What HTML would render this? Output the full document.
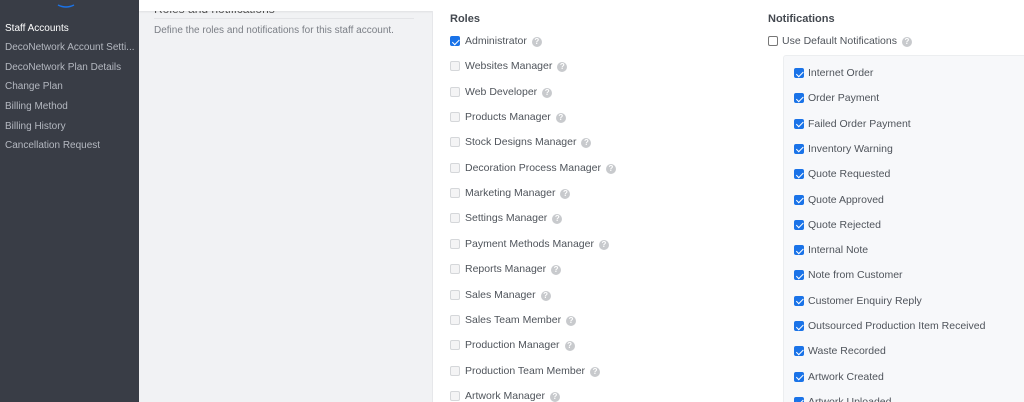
<!DOCTYPE html>
<html><head><meta charset="utf-8"><style>
*{margin:0;padding:0;box-sizing:border-box}
html,body{width:1024px;height:402px;overflow:hidden}
body{background:#f1f2f4;font-family:"Liberation Sans",sans-serif;position:relative}
.side{position:absolute;left:0;top:0;width:139px;height:402px;background:#393d46}
.side div{position:absolute;left:5px;font-size:10px;color:#b4b8c0;white-space:nowrap;line-height:12px}
.side .act{color:#fff}
.topbar{position:absolute;left:139px;top:0;right:0;height:11px;background:#fff;box-shadow:0 1px 2px rgba(0,0,0,.08)}
.card{position:absolute;left:432px;top:11px;width:600px;height:391px;background:#fff;border-left:1px solid #e6e7ea}
.t{position:absolute;font-size:10.5px;color:#4f545b;white-space:nowrap;line-height:12px}
.h{position:absolute;font-size:11px;font-weight:bold;color:#444950;line-height:12px}
.cb{position:absolute;width:10px;height:10px;border:1px solid #d5d7da;border-radius:2px;background:#f4f4f5}
.cb.on{background:#1a73e8;border-color:#1a73e8}
.cb.on::after{content:"";position:absolute;left:2.5px;top:0.5px;width:3px;height:5.5px;border:solid #fff;border-width:0 1.5px 1.5px 0;transform:rotate(45deg)}
.cb.w{background:#fff;border-color:#777}
.q{display:inline-block;width:10px;height:10px;border-radius:50%;background:#c8cacd;color:#fff;font-size:8px;text-align:center;line-height:10px;margin-left:5px;vertical-align:0px;font-weight:bold}
.nbox{position:absolute;left:783px;top:55px;width:260px;height:360px;background:#f7f8fa;border:1px solid #eceef0;border-radius:3px}
</style></head><body>
<div class="side">
<svg style="position:absolute;left:56px;top:0" width="20" height="8"><path d="M2 5 Q10 9 18 5" stroke="#1a73e8" stroke-width="1.5" fill="none"/></svg>
<div class="act" style="top:23px">Staff Accounts</div>
<div style="top:42px">DecoNetwork Account Setti...</div>
<div style="top:62px">DecoNetwork Plan Details</div>
<div style="top:81px">Change Plan</div>
<div style="top:101px">Billing Method</div>
<div style="top:121px">Billing History</div>
<div style="top:140px">Cancellation Request</div>
</div>
<div class="t" style="left:154px;top:3px;font-size:12px;color:#555">Roles and notifications</div>
<div style="position:absolute;left:154px;top:18px;width:260px;height:1px;background:#e3e4e7"></div>
<div class="t" style="left:154px;top:25px;color:#7b7f86;font-size:10px">Define the roles and notifications for this staff account.</div>
<div class="topbar"></div>
<div class="card"></div>
<div class="h" style="left:450px;top:13px">Roles</div>
<div class="h" style="left:768px;top:13px">Notifications</div>
<div class="cb w" style="left:768px;top:36px"></div><div class="t" style="left:782px;top:35px">Use Default Notifications<span class="q">?</span></div>
<div class="nbox"></div>
<div id="r"></div><div id="n"></div>
<script>
var roles=["Administrator","Websites Manager","Web Developer","Products Manager","Stock Designs Manager","Decoration Process Manager","Marketing Manager","Settings Manager","Payment Methods Manager","Reports Manager","Sales Manager","Sales Team Member","Production Manager","Production Team Member","Artwork Manager"];
var h="";roles.forEach(function(r,i){var y=41+i*25.35;h+='<div class="cb'+(i==0?' on':'')+'" style="left:450px;top:'+(y-5)+'px"></div><div class="t" style="left:465px;top:'+(y-6)+'px">'+r+'<span class="q">?</span></div>';});
document.getElementById("r").innerHTML=h;
var n=["Internet Order","Order Payment","Failed Order Payment","Inventory Warning","Quote Requested","Quote Approved","Quote Rejected","Internal Note","Note from Customer","Customer Enquiry Reply","Outsourced Production Item Received","Waste Recorded","Artwork Created","Artwork Uploaded"];
h="";n.forEach(function(r,i){var y=73+i*25.3;h+='<div class="cb on" style="left:794px;top:'+(y-5)+'px"></div><div class="t" style="left:808px;top:'+(y-6)+'px">'+r+'</div>';});
document.getElementById("n").innerHTML=h;
</script>
</body></html>
